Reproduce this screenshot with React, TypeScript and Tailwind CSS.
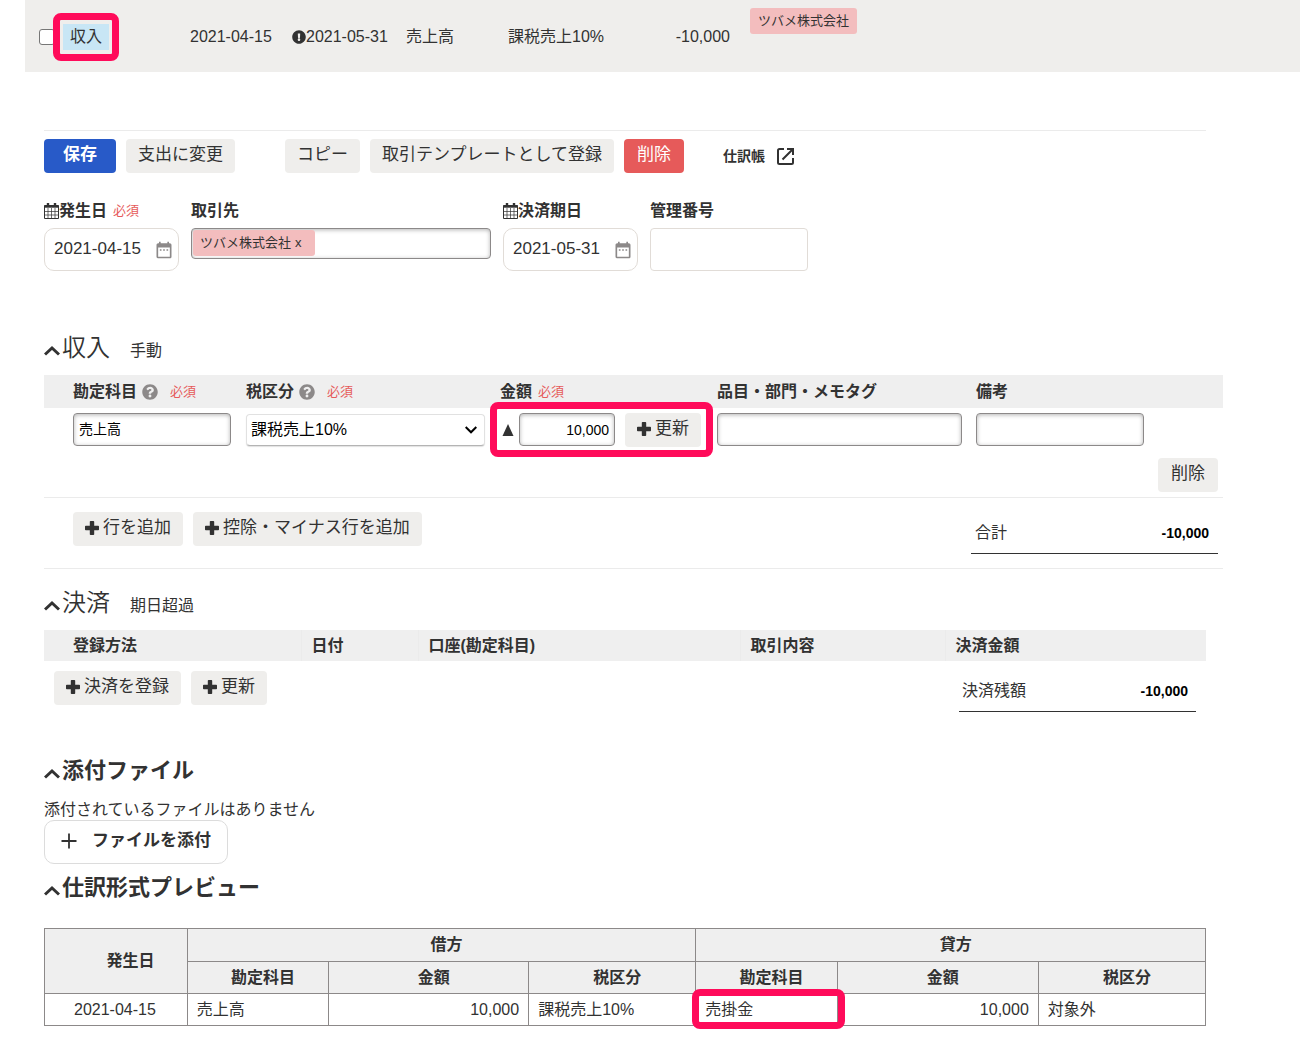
import type { ButtonHTMLAttributes, InputHTMLAttributes, ReactNode } from "react";
import { FaExclamationCircle, FaQuestionCircle } from "react-icons/fa";
import { MdDateRange } from "react-icons/md";

const PlusIcon = () => (
  <svg viewBox="0 0 14 14" className="size-3.5 shrink-0" fill="currentColor" aria-hidden="true">
    <path d="M5.6 0h2.8q.8 0 .8.8v4h4q.8 0 .8.8v2.8q0 .8-.8.8h-4v4q0 .8-.8.8H5.6q-.8 0-.8-.8v-4h-4Q0 9.200 0 8.400V5.600q0-.8.8-.8h4v-4q0-.8.8-.8z" />
  </svg>
);

const ThinPlusIcon = () => (
  <svg viewBox="0 0 16 16" className="size-4 shrink-0" stroke="currentColor" strokeWidth="1.8" aria-hidden="true">
    <path d="M8 .5v15M.5 8h15" />
  </svg>
);

const OpenInNewIcon = () => (
  <svg viewBox="0 0 17 17" className="size-[17px] shrink-0" fill="none" stroke="currentColor" strokeWidth="2" aria-hidden="true">
    <path d="M7 1H2.500Q1 1 1 2.500v12Q1 16 2.500 16h12q1.500 0 1.500-1.500V10" />
    <path d="M10 1h6v6M16 1 5.500 11.500" />
  </svg>
);

const GridCalendarIcon = () => (
  <svg viewBox="0 0 15 16" className="h-4 w-[15px] shrink-0" fill="none" stroke="currentColor" aria-hidden="true">
    <path d="M.5 2.500h14v13H.5z" />
    <path d="M.5 3.500h14" strokeWidth="2.400" />
    <path d="M4 0v4M11 0v4" strokeWidth="2.400" />
    <path d="M4 5v10M7.500 5v10M11 5v10M1 8.500h13M1 12h13" strokeWidth=".7" />
  </svg>
);

const ChevronUp = () => (
  <svg viewBox="0 0 16 11" className="mt-[5px] h-[11px] w-4 shrink-0" fill="none" stroke="currentColor" strokeWidth="3" aria-hidden="true">
    <path d="M1 9.500 8 3l7 6.500" />
  </svg>
);

type ButtonProps = ButtonHTMLAttributes<HTMLButtonElement> & { tone?: "plain" | "primary" | "danger" };

function Button({ tone = "plain", className = "", children, ...rest }: ButtonProps) {
  const tones = {
    plain: "bg-[#efeeec] px-3",
    primary: "bg-[#285ac8] px-[19px] font-bold text-white",
    danger: "bg-[#e65a5a] px-[13px] text-white",
  };
  return (
    <button
      type="button"
      className={`flex h-[34px] shrink-0 items-center gap-1 rounded-[4px] pb-0.5 text-[17px] leading-6 whitespace-nowrap ${tones[tone]} ${className}`}
      {...rest}
    >
      {children}
    </button>
  );
}

const Required = () => <span className="text-[13px] font-normal text-[#e65a5a]">必須</span>;

const Help = ({ label }: { label: string }) => (
  <button type="button" aria-label={label} className="mr-3 ml-[5px] text-[#8c8989]">
    <FaQuestionCircle className="size-4" />
  </button>
);

function InsetInput({ className = "", ...rest }: InputHTMLAttributes<HTMLInputElement>) {
  return (
    <input
      type="text"
      className={`block h-[33px] rounded-[4px] border border-[#8c8989] bg-white px-[5px] text-sm text-black shadow-[inset_0_1px_4px_rgba(0,0,0,0.3)] ${className}`}
      {...rest}
    />
  );
}

function DateField({ id, label, value, required }: { id: string; label: string; value: string; required?: boolean }) {
  return (
    <div className="w-[135px] shrink-0">
      <div className="flex h-5 items-center gap-1.5 whitespace-nowrap">
        <label htmlFor={id} className="flex items-center font-bold">
          <GridCalendarIcon />
          {label}
        </label>
        {required && <Required />}
      </div>
      <div className="mt-[7px] flex h-[43px] items-center rounded-[10px] border border-[#e1dcd7] pr-1 pl-[9px]">
        <input id={id} type="text" defaultValue={value} className="w-0 flex-1 pb-0.5 text-[17px]" />
        <button type="button" aria-label={`${label}を選択`} className="text-[#8c8989]">
          <MdDateRange className="size-5" />
        </button>
      </div>
    </div>
  );
}

const Highlight = ({ className }: { className: string }) => (
  <span aria-hidden="true" className={`pointer-events-none absolute rounded-[8px] border-[7px] border-[#ff0b5a] ${className}`} />
);

function SectionTitle({ children, note, bold }: { children: ReactNode; note?: string; bold?: boolean }) {
  return (
    <div className="flex h-8 items-center">
      <h2 className={bold ? "text-[22px] font-bold" : "text-2xl font-[350]"}>
        <button type="button" aria-expanded="true" className="flex items-center gap-0.5 leading-8">
          <ChevronUp />
          {children}
        </button>
      </h2>
      {note && <span className="mt-1.5 ml-5">{note}</span>}
    </div>
  );
}

const sides = ["借方", "貸方"];
const sideHeads = ["勘定科目", "金額", "税区分"];

function TransactionRow() {
  return (
    <header className="ml-[25px] grid h-[72px] grid-cols-[151px_102px_114px_102px_222px_auto] items-center bg-[#efeeec] pt-0.5 pl-[14px] whitespace-nowrap">
      <div className="relative flex items-center gap-2">
        <input type="checkbox" aria-label="収入の取引を選択" className="size-4 appearance-none rounded-[3px] border border-[#767676] bg-white" />
        <span className="flex h-[26px] w-[46px] items-center justify-center bg-[#c8e6f5]">収入</span>
        <Highlight className="top-1/2 left-[14px] h-12 w-[66px] -translate-y-1/2" />
      </div>
      <span>2021-04-15</span>
      <span className="flex items-center">
        <FaExclamationCircle className="size-3.5" />
        2021-05-31
      </span>
      <span>売上高</span>
      <span className="flex justify-between">
        <span>課税売上10%</span>
        <span>-10,000</span>
      </span>
      <span className="mt-1.5 ml-5 flex h-[26px] items-center justify-self-start self-start rounded-[3px] bg-[#f3bdbe] px-2 pb-px text-[13px]">
        ツバメ株式会社
      </span>
    </header>
  );
}

function Toolbar() {
  return (
    <div className="mt-[58px] mr-[94px] ml-11 flex items-center gap-[10px] border-t border-[#ebebeb] pt-2">
      <Button tone="primary">保存</Button>
      <Button>支出に変更</Button>
      <Button className="ml-10">コピー</Button>
      <Button>取引テンプレートとして登録</Button>
      <Button tone="danger">削除</Button>
      <a href="#journal" className="ml-[29px] flex items-center gap-3 text-sm font-bold whitespace-nowrap">
        仕訳帳
        <OpenInNewIcon />
      </a>
    </div>
  );
}

function BasicFields() {
  return (
    <div className="mt-7 mr-[94px] ml-11 flex items-start gap-3">
      <DateField id="issue-date" label="発生日" value="2021-04-15" required />
      <div className="w-[300px]">
        <label htmlFor="partner" className="block h-5 leading-5 font-bold">
          取引先
        </label>
        <div className="mt-[7px] flex h-[31px] rounded-[4px] border border-[#8c8989] p-px pb-0.5 shadow-[inset_0_1px_4px_rgba(0,0,0,0.3)]">
          <span className="flex items-center gap-1 rounded-[3px] bg-[#f3bdbe] px-[7px] text-[13px] whitespace-nowrap">
            ツバメ株式会社
            <button type="button" aria-label="ツバメ株式会社を外す" className="pr-1.5">
              x
            </button>
          </span>
          <input id="partner" type="text" className="w-0 flex-1" />
        </div>
      </div>
      <DateField id="due-date" label="決済期日" value="2021-05-31" />
      <div className="w-[158px]">
        <label htmlFor="control-number" className="block h-5 leading-5 font-bold">
          管理番号
        </label>
        <input id="control-number" type="text" className="mt-[7px] block h-[43px] w-full rounded-[4px] border border-[#e1dcd7] px-2" />
      </div>
    </div>
  );
}

function IncomeSection() {
  return (
    <section className="mt-[61px] mr-[77px] ml-11">
      <SectionTitle note="手動">収入</SectionTitle>
      <table className="mt-[11px] w-full table-fixed border-b border-[#ebebeb] text-left whitespace-nowrap">
        <colgroup>
          <col className="w-[192px]" />
          <col className="w-[254px]" />
          <col className="w-[217px]" />
          <col className="w-[259px]" />
          <col />
        </colgroup>
        <thead className="h-[33px] bg-[#efefef]">
          <tr>
            <th className="pl-[29px]">
              <span className="flex items-center">
                <label htmlFor="account">勘定科目</label>
                <Help label="勘定科目の説明" />
                <Required />
              </span>
            </th>
            <th className="pl-[10px]">
              <span className="flex items-center">
                <label htmlFor="tax">税区分</label>
                <Help label="税区分の説明" />
                <Required />
              </span>
            </th>
            <th className="pl-[10px]">
              <span className="flex items-center gap-1.5">
                <label htmlFor="amount">金額</label>
                <Required />
              </span>
            </th>
            <th className="pl-[10px]">
              <label htmlFor="tags">品目・部門・メモタグ</label>
            </th>
            <th className="pl-[10px]">
              <label htmlFor="memo">備考</label>
            </th>
          </tr>
        </thead>
        <tbody>
          <tr className="h-[43px]">
            <td className="pl-[29px]">
              <InsetInput id="account" defaultValue="売上高" className="w-[158px] pb-1" />
            </td>
            <td className="pl-[10px]">
              <div className="relative w-[239px]">
                <select
                  id="tax"
                  className="block h-8 w-full appearance-none rounded-[4px] border border-[#e1e1e1] border-b-[#b4b4b4] bg-white pl-1 text-black shadow-[0_1px_1px_rgba(0,0,0,0.12)]"
                >
                  <option>課税売上10%</option>
                </select>
                <svg viewBox="0 0 12 8" className="pointer-events-none absolute top-3 right-2 h-2 w-3 text-black" fill="none" stroke="currentColor" strokeWidth="2" aria-hidden="true">
                  <path d="m.7 1 5.300 5.300L11.300 1" />
                </svg>
              </div>
            </td>
            <td className="relative pl-3">
              <Highlight className="-top-1.5 left-0 h-[55px] w-[223px]" />
              <div className="flex items-center">
                <svg viewBox="0 0 12 12" className="mr-[5px] size-3" fill="currentColor" role="img" aria-label="マイナス">
                  <path d="M6 0 11.500 12H.5z" />
                </svg>
                <InsetInput id="amount" defaultValue="10,000" className="mr-[10px] w-24 text-right" />
                <Button>
                  <PlusIcon />
                  更新
                </Button>
              </div>
            </td>
            <td className="pl-[10px]">
              <InsetInput id="tags" className="w-[245px]" />
            </td>
            <td className="pl-[10px]">
              <InsetInput id="memo" className="w-[168px]" />
            </td>
          </tr>
          <tr className="h-[46px]">
            <td colSpan={5} className="pt-[7px] pr-[5px] pb-[5px]">
              <Button className="ml-auto px-[13px]">削除</Button>
            </td>
          </tr>
        </tbody>
        <tfoot>
          <tr className="h-[71px] border-t border-[#ebebeb] align-top">
            <td colSpan={4} className="pt-[14px] pl-[29px]">
              <div className="flex gap-[10px]">
                <Button>
                  <PlusIcon />
                  行を追加
                </Button>
                <Button>
                  <PlusIcon />
                  控除・マイナス行を追加
                </Button>
              </div>
            </td>
            <td className="pt-[14px] pr-[5px] pl-[5px]">
              <div className="flex h-[42px] items-center justify-between border-b border-[#323232] pr-[9px] pl-1">
                <span>合計</span>
                <span className="text-sm font-bold text-black">-10,000</span>
              </div>
            </td>
          </tr>
        </tfoot>
      </table>
    </section>
  );
}

function SettlementSection() {
  return (
    <section className="mt-[18px] mr-[94px] ml-11">
      <SectionTitle note="期日超過">決済</SectionTitle>
      <table className="mt-[11px] w-full table-fixed text-left whitespace-nowrap">
        <colgroup>
          <col className="w-[257px]" />
          <col className="w-[117px]" />
          <col className="w-[322px]" />
          <col className="w-[205px]" />
          <col />
        </colgroup>
        <thead className="h-[31px] bg-[#efefef]">
          <tr>
            <th className="pl-[29px]">登録方法</th>
            <th className="border-l border-[#ebebeb] pl-[10px]">日付</th>
            <th className="border-l border-[#ebebeb] pl-[10px]">口座(勘定科目)</th>
            <th className="border-l border-[#ebebeb] pl-[10px]">取引内容</th>
            <th className="border-l border-[#ebebeb] pl-[10px]">決済金額</th>
          </tr>
        </thead>
        <tbody>
          <tr className="align-top">
            <td colSpan={4} className="pt-[10px] pl-[10px]">
              <div className="flex gap-[10px]">
                <Button>
                  <PlusIcon />
                  決済を登録
                </Button>
                <Button>
                  <PlusIcon />
                  更新
                </Button>
              </div>
            </td>
            <td className="pt-[9px] pr-[10px] pl-[14px]">
              <div className="flex h-[42px] items-center justify-between border-b border-[#323232] pr-2 pl-[3px]">
                <span>決済残額</span>
                <span className="text-sm font-bold text-black">-10,000</span>
              </div>
            </td>
          </tr>
        </tbody>
      </table>
    </section>
  );
}

function PreviewTable() {
  const cell = "border border-[#8c8989]";
  return (
    <table id="journal" className="mt-6 w-full table-fixed border-collapse text-left">
      <colgroup>
        <col className="w-[12.300%]" />
        <col className="w-[12.200%]" />
        <col className="w-[17.200%]" />
        <col className="w-[14.400%]" />
        <col className="w-[12.200%]" />
        <col className="w-[17.300%]" />
        <col className="w-[14.400%]" />
      </colgroup>
      <thead className="bg-[#efefef] text-center">
        <tr className="h-[33px]">
          <th rowSpan={2} className={`${cell} pl-[29px]`}>
            発生日
          </th>
          {sides.map((side) => (
            <th key={side} colSpan={3} className={`${cell} pl-[10px]`}>
              {side}
            </th>
          ))}
        </tr>
        <tr className="h-8">
          {sides.map((side) =>
            sideHeads.map((head) => (
              <th key={side + head} className={`${cell} pl-[10px]`}>
                {head}
              </th>
            )),
          )}
        </tr>
      </thead>
      <tbody>
        <tr className="h-8">
          <td className={`${cell} pl-[29px]`}>2021-04-15</td>
          <td className={`${cell} px-[9px]`}>売上高</td>
          <td className={`${cell} px-[9px] text-right`}>10,000</td>
          <td className={`${cell} px-[9px]`}>課税売上10%</td>
          <td className={`${cell} relative px-[9px]`}>
            売掛金
            <Highlight className="-top-[5px] -right-2 -bottom-1 -left-1" />
          </td>
          <td className={`${cell} px-[9px] text-right`}>10,000</td>
          <td className={`${cell} px-[9px]`}>対象外</td>
        </tr>
      </tbody>
    </table>
  );
}

export default function App() {
  return (
    <div className="min-h-screen min-w-[1240px] bg-white pb-8 font-['Liberation_Sans','Noto_Sans_CJK_JP',sans-serif] text-base leading-6 text-[#323232]">
      <TransactionRow />
      <main>
        <Toolbar />
        <BasicFields />
        <IncomeSection />
        <SettlementSection />
        <section className="mt-[43px] mr-[94px] ml-11">
          <SectionTitle bold>添付ファイル</SectionTitle>
          <p className="mt-[13px] leading-5">添付されているファイルはありません</p>
          <button type="button" className="flex h-11 items-center gap-[15px] rounded-[10px] border border-[#dcdcdc] px-4 pb-0.5 text-[17px] font-bold">
            <ThinPlusIcon />
            ファイルを添付
          </button>
        </section>
        <section className="mt-2 mr-[94px] ml-11">
          <SectionTitle bold>仕訳形式プレビュー</SectionTitle>
          <PreviewTable />
        </section>
      </main>
    </div>
  );
}
